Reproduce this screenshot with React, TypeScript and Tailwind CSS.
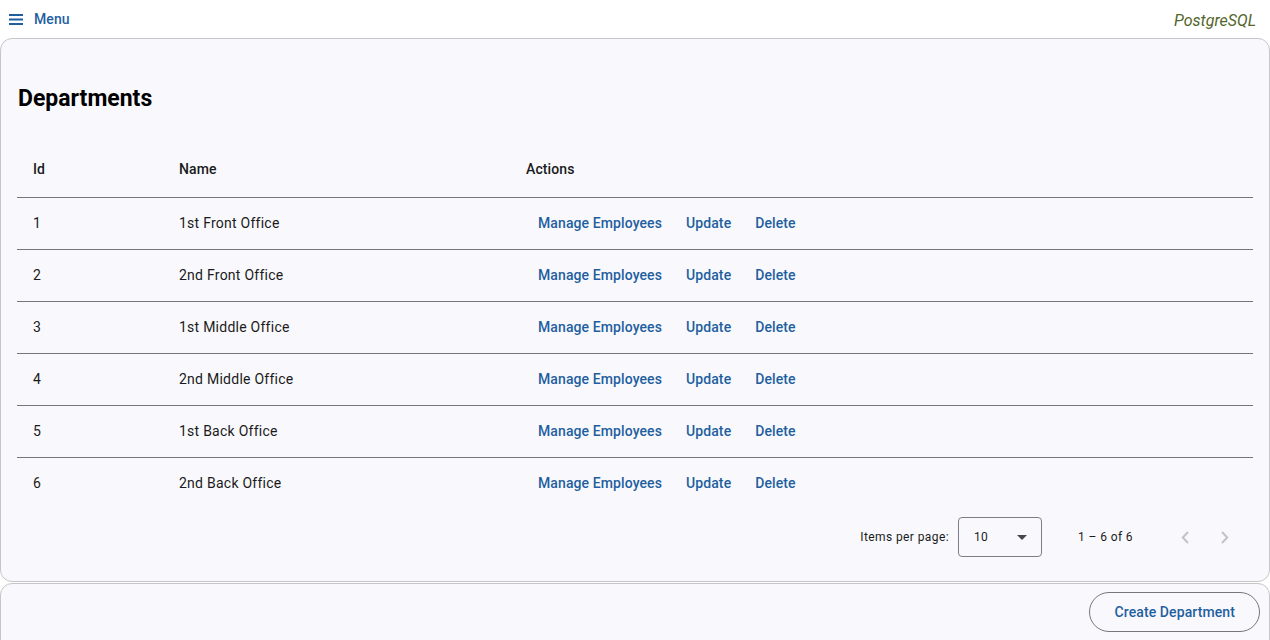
import React from "react";

const departments = [
  { id: 1, name: "1st Front Office" },
  { id: 2, name: "2nd Front Office" },
  { id: 3, name: "1st Middle Office" },
  { id: 4, name: "2nd Middle Office" },
  { id: 5, name: "1st Back Office" },
  { id: 6, name: "2nd Back Office" },
];

const App: React.FC = () => {
  return (
    <div className="min-h-screen bg-white font-['Roboto',sans-serif] text-[#1a1b20]">
      {/* Top bar */}
      <div className="flex h-[38px] items-center justify-between pl-[9px] pr-[14px]">
        <button className="flex items-center gap-[11px] text-[14px] font-medium tracking-[0.1px] text-[#1f5f9f]">
          <svg width="14" height="11" viewBox="0 0 14 11" fill="#1f5f9f">
            <rect x="0" y="0" width="14" height="2" />
            <rect x="0" y="4.5" width="14" height="2" />
            <rect x="0" y="9" width="14" height="2" />
          </svg>
          Menu
        </button>
        <span className="mt-[3px] text-[16px] italic text-[#52652a]">PostgreSQL</span>
      </div>

      {/* Departments card */}
      <div className="rounded-[12px] border border-[#c6c6ca] bg-[#f9f9fd] px-4 pb-[16px]">
        <h1 className="pt-[45px] pl-[1px] text-[23px] font-bold leading-[29px] text-black">Departments</h1>

        <table className="mt-[28px] w-full table-fixed border-collapse text-[14px] tracking-[0.25px]">
          <thead>
            <tr className="h-[56px] border-b border-[#75777c]">
              <th className="w-[146px] px-4 pt-[2px] text-left font-medium tracking-[0.1px]">Id</th>
              <th className="w-[347px] px-4 pt-[2px] text-left font-medium tracking-[0.1px]">Name</th>
              <th className="px-4 pt-[2px] text-left font-medium tracking-[0.1px]">Actions</th>
            </tr>
          </thead>
          <tbody>
            {departments.map((d, i) => (
              <tr
                key={d.id}
                className={
                  i < departments.length - 1
                    ? "h-[52px] border-b border-[#75777c]"
                    : "h-[52px]"
                }
              >
                <td className="px-4 pt-[1px]">{d.id}</td>
                <td className="px-4 pt-[1px]">{d.name}</td>
                <td className="px-4 pt-[1px]">
                  <div className="flex font-medium tracking-[0.1px] text-[#1f5f9f]">
                    <button className="h-[40px] px-3">Manage Employees</button>
                    <button className="h-[40px] px-3">Update</button>
                    <button className="h-[40px] px-3">Delete</button>
                  </div>
                </td>
              </tr>
            ))}
          </tbody>
        </table>

        {/* Paginator */}
        <div className="flex h-[56px] items-center justify-end pr-[12px] text-[12px] tracking-[0.4px] text-[#1a1b20]">
          <span>Items per page:</span>
          <div className="ml-[9px] flex h-[40px] w-[84px] items-center justify-between rounded-[4px] border border-[#7c7e84] pl-[15px] pr-[14px]">
            <span>10</span>
            <svg width="10" height="5" viewBox="0 0 10 5" fill="#44474e">
              <path d="M0 0 L10 0 L5 5 Z" />
            </svg>
          </div>
          <span className="ml-[36px]">1 – 6 of 6</span>
          <div className="ml-[40px] flex items-center gap-[16px] pr-[4px]">
            <button className="flex h-[24px] w-[24px] items-center justify-center">
              <svg width="8" height="13" viewBox="0 0 8 13" fill="none" stroke="#c2c3c8" strokeWidth="2">
                <path d="M7 1 L1.8 6.5 L7 12" />
              </svg>
            </button>
            <button className="flex h-[24px] w-[24px] items-center justify-center">
              <svg width="8" height="13" viewBox="0 0 8 13" fill="none" stroke="#c2c3c8" strokeWidth="2">
                <path d="M1 1 L6.2 6.5 L1 12" />
              </svg>
            </button>
          </div>
        </div>
      </div>

      {/* Actions card */}
      <div className="mt-[1px] flex h-[70px] items-start justify-end rounded-[12px] border border-[#c6c6ca] bg-[#f9f9fd] pt-[8px] pr-[9px]">
        <button className="h-[40px] rounded-full border border-[#75777c] px-[24px] text-[14px] font-medium tracking-[0.1px] text-[#1f5f9f]">
          Create Department
        </button>
      </div>
    </div>
  );
};

export default App;
